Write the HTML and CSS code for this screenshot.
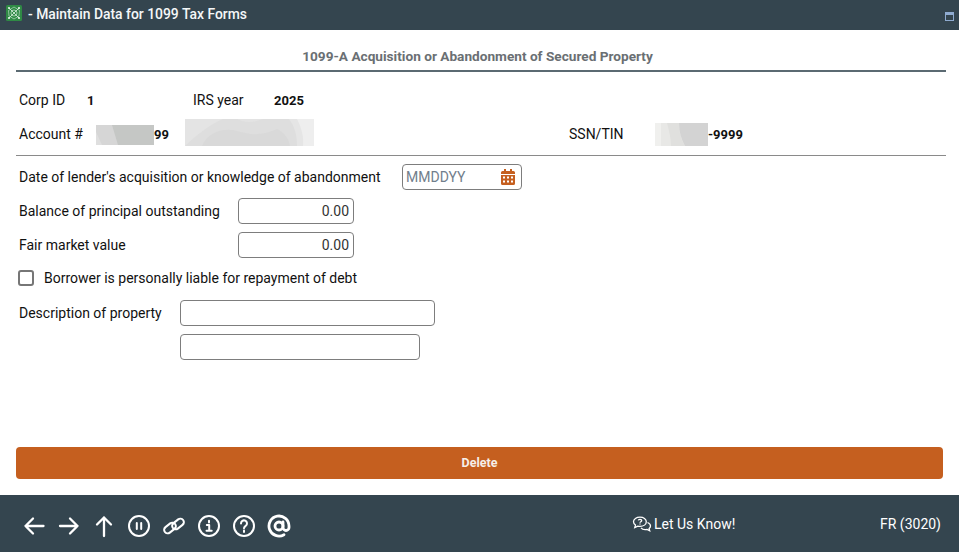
FILE: index.html
```html
<!DOCTYPE html>
<html lang="en">
<head>
<meta charset="utf-8">
<title>Maintain Data for 1099 Tax Forms</title>
<link rel="stylesheet" href="styles.css">
</head>
<body>
<div class="app">
  <header class="titlebar">
    <svg class="logo" viewBox="0 0 16 16" width="16" height="16">
      <rect width="16" height="16" rx="1.500" fill="#2f8a45"/>
      <g fill="none" stroke="#cfe8d6">
        <path d="M3 3 13 13M13 3 3 13" stroke-width=".9"/>
        <path d="M8 2 13.500 5.500 13 11 8 14 3 11 2.500 5.500Z" stroke-width=".6"/>
        <circle cx="8" cy="8" r="3" stroke-width=".7"/>
      </g>
      <g fill="#e6f4ea"><circle cx="3" cy="3" r="1.100"/><circle cx="13" cy="3" r="1.100"/><circle cx="3" cy="13" r="1.100"/><circle cx="13" cy="13" r="1.100"/></g>
    </svg>
    <span class="title">- Maintain Data for 1099 Tax Forms</span>
    <span class="winbtn"></span>
  </header>

  <main class="content">
    <h1 class="heading">1099-A Acquisition or Abandonment of Secured Property</h1>

    <section class="info">
      <div class="inforow">
        <span class="lbl w-corp">Corp ID</span>
        <b class="val w-one">1</b>
        <span class="lbl w-irs">IRS year</span>
        <b class="val">2025</b>
      </div>
      <div class="inforow inforow-2">
        <span class="lbl w-acct">Account #</span>
        <svg class="redact r-acct" viewBox="0 0 58 20" width="58" height="20">
          <rect width="58" height="20" fill="#d6d6d6"/>
          <path d="M0 7 6 20H0Z" fill="#dfdfdf"/>
          <path d="M16 0H58V20H22Z" fill="#c5c7c5"/>
        </svg>
        <b class="val w-acctval">99</b>
        <svg class="redact r-name" viewBox="0 0 129 27" width="129" height="27">
          <rect width="129" height="27" fill="#dedede"/>
          <path d="M0 0H38C20 8 10 18 0 27Z" fill="#e4e4e4"/>
          <path d="M17 27C22 14 38 8 52 12 66 16 76 17 92 10 100 14 104 20 105 27Z" fill="#d9d9d9"/>
          <path d="M52 0C60 4 68 4 78 0Z" fill="#e3e3e3"/>
          <path d="M104 0H129V27H112C112 16 110 8 104 0Z" fill="#e5e5e5"/>
          <path d="M112 0H129V27H118C119 16 116 8 112 0Z" fill="#eeeeee"/>
        </svg>
        <span class="lbl w-ssn">SSN/TIN</span>
        <svg class="redact r-ssn" viewBox="0 0 53 23" width="53" height="23">
          <rect width="53" height="23" fill="#e8e8e6"/>
          <rect width="6" height="23" fill="#f0f0ee"/>
          <path d="M12 0H24C24 8 26 17 30 23H16C16 15 14 8 12 0Z" fill="#e0e0de"/>
          <path d="M24 0H53V23H30C26 16 24 8 24 0Z" fill="#d3d3d3"/>
        </svg>
        <b class="val">-9999</b>
      </div>
    </section>

    <section class="form">
      <div class="row">
        <label class="lbl w-date">Date of lender's acquisition or knowledge of abandonment</label>
        <div class="box box-date">
          <span class="placeholder">MMDDYY</span>
          <svg class="cal" viewBox="0 0 14 16" width="14" height="16">
            <path fill="#c55f1f" d="M3 0h2v2h4V0h2v2h1.500A1.500 1.500 0 0 1 14 3.500V5H0V3.500A1.500 1.500 0 0 1 1.500 2H3Z"/>
            <path fill="#c55f1f" fill-rule="evenodd" d="M0 6h14v8.500a1.500 1.500 0 0 1-1.500 1.500h-11A1.500 1.500 0 0 1 0 14.500ZM2 7.500V9.500H4V7.500ZM6 7.500V9.500H8V7.500ZM10 7.500V9.500H12V7.500ZM2 11.500V13.500H4V11.500ZM6 11.500V13.500H8V11.500ZM10 11.500V13.500H12V11.500Z"/>
          </svg>
        </div>
      </div>
      <div class="row">
        <label class="lbl w-money">Balance of principal outstanding</label>
        <div class="box box-money">0.00</div>
      </div>
      <div class="row">
        <label class="lbl w-money">Fair market value</label>
        <div class="box box-money">0.00</div>
      </div>
      <div class="row row-check">
        <span class="check"></span>
        <label class="lbl">Borrower is personally liable for repayment of debt</label>
      </div>
      <div class="row row-desc">
        <label class="lbl w-desc">Description of property</label>
        <div class="box box-desc1"></div>
      </div>
      <div class="row">
        <div class="box box-desc2"></div>
      </div>
    </section>

    <button class="delete" type="button">Delete</button>
  </main>

  <footer class="footer">
    <nav class="icons">
      <svg viewBox="0 0 24 24" class="ico"><path d="M21.500 12H3.500M11 4.500 3.500 12l7.500 7.500"/></svg>
      <svg viewBox="0 0 24 24" class="ico"><path d="M3 12h17.500M13 4.500l7.500 7.500-7.500 7.500"/></svg>
      <svg viewBox="0 0 24 24" class="ico"><path d="M12 22V3.500M5 10.500l7-7 7 7"/></svg>
      <svg viewBox="0 0 24 24" class="ico ico-thin"><circle cx="12" cy="12" r="10"/><path d="M9.800 9v6M14.200 9v6"/></svg>
      <svg viewBox="0 0 24 24" class="ico ico-thin"><rect x="1.500" y="10.500" width="13" height="7" rx="3.500" transform="rotate(-38 8 14)"/><rect x="9.500" y="6.500" width="13" height="7" rx="3.500" transform="rotate(-38 16 10)"/></svg>
      <svg viewBox="0 0 24 24" class="ico ico-thin"><circle cx="12" cy="12" r="10"/><path d="M12 6.800v1.800M9.800 11h2.400v5.800M9.500 16.800h5.200"/></svg>
      <svg viewBox="0 0 24 24" class="ico ico-thin"><circle cx="12" cy="12" r="10"/><path d="M9 9.500a3 3 0 1 1 4.800 2.300c-1 .8-1.800 1.200-1.800 2.400M12 16.600v1.400"/></svg>
      <svg viewBox="0 0 24 24" class="ico ico-at"><circle cx="12" cy="12" r="4"/><path d="M16 8v5.500a3 3 0 0 0 6 0V12a10 10 0 1 0-5 8.700"/></svg>
    </nav>
    <div class="letus">
      <svg viewBox="0 0 20 16" width="20" height="16" class="chat">
        <path d="M8 1.200c3.600 0 6.300 2 6.300 4.600S11.600 10.400 8 10.400c-.8 0-1.500-.1-2.200-.3L2.800 11.500l.7-2.500C2.200 8.100 1.500 7 1.500 5.800 1.500 3.200 4.400 1.200 8 1.200Z"/>
        <path d="M15.500 6.500c1.900.7 3 2 3 3.500 0 1-.5 1.900-1.400 2.600l.6 2.200-2.700-1.300c-2 .4-4.700 0-6-1.600"/>
        <path d="M6.300 4.400c.2-1.500 3.400-1.500 3.400.2 0 1.100-1.700 1.200-1.700 2.200M8 7.600v1"/>
      </svg>
      <span>Let Us Know!</span>
    </div>
    <div class="code">FR (3020)</div>
  </footer>
</div>
</body>
</html>
```

FILE: styles.css
```css
* { box-sizing: border-box; }
html, body { margin: 0; padding: 0; }
body {
  font-family: Roboto, "Liberation Sans", sans-serif;
  font-size: 14px;
  color: #111;
  background: #fff;
}
.app {
  width: 959px;
  height: 552px;
  display: flex;
  flex-direction: column;
  overflow: hidden;
}

/* title bar */
.titlebar {
  height: 30px;
  flex: none;
  background: #34454f;
  color: #fff;
  display: flex;
  align-items: center;
  padding: 0 5px 0 6px;
}
.logo { flex: none; margin-top: -4px; }
.title {
  margin-left: 6px;
  font-size: 13.900px;
  font-weight: 500;
  color: #f4f7f8;
  flex: 1;
  margin-top: -2px;
}
.winbtn {
  width: 9px;
  height: 9px;
  margin: 3px 0 0;
  border: 1px solid #8fabd0;
  border-top-width: 3px;
}

/* main */
.content {
  flex: 1;
  display: flex;
  flex-direction: column;
  padding: 0 13px 0 16px;
}
.heading {
  margin: 0;
  width: 930px;
  height: 42px;
  padding: 18px 7px 0 0;
  line-height: 16px;
  border-bottom: 2px solid #5b6a72;
  font-size: 13.650px;
  font-weight: 700;
  text-align: center;
  color: #6a6f73;
}
.info {
  width: 930px;
  height: 84px;
  padding: 16px 0 0 3px;
  border-bottom: 1px solid #8a8a8a;
  flex: none;
}
.inforow { display: flex; align-items: center; height: 24px; }
.inforow-2 { margin-top: 10px; }
.lbl { display: block; white-space: nowrap; line-height: 16px; }
.val { font-size: 13px; font-weight: 700; line-height: 16px; margin-top: 2px; color: #111; }
.w-corp { width: 68px; }
.w-one { width: 106px; }
.w-irs { width: 81px; }
.w-acct { width: 77px; }
.w-acctval { width: 31px; }
.w-ssn { width: 86px; margin-left: 255px; }

.redact { display: block; flex: none; }
.r-acct { margin-top: 2px; }
.r-name { margin-top: -4px; }
.r-ssn { margin-top: 1px; }

/* form */
.form { display: flex; flex-direction: column; padding-left: 3px; }
.row { display: flex; align-items: center; height: 26px; margin-top: 8px; }
.w-date { width: 383px; }
.w-money { width: 219px; margin-top: -1px; }
.w-desc { width: 161px; margin-top: -1px; }
.box {
  height: 26px;
  border: 1px solid #7d7d7d;
  border-radius: 4px;
  background: #fff;
  flex: none;
}
.box-date {
  width: 120px;
  display: flex;
  align-items: center;
  justify-content: space-between;
  padding: 0 6px 0 3px;
}
.placeholder { color: #717e8c; line-height: 16px; }
.cal { flex: none; }
.box-money {
  width: 116px;
  text-align: right;
  padding-right: 4px;
  line-height: 24px;
  color: #333;
}
.box-desc1 { width: 255px; }
.box-desc2 { width: 240px; margin-left: 161px; }
.row-check { height: 16px; margin-top: 12px; }
.check {
  width: 16px;
  height: 16px;
  border: 2px solid #767676;
  border-radius: 3px;
  margin: 0 10px 0 -1px;
  flex: none;
}
.row-desc { margin-top: 14px; }

.delete {
  margin-top: 87px;
  width: 927px;
  height: 32px;
  flex: none;
  border: 0;
  border-radius: 4px;
  background: #c55f1f;
  color: #f6efe9;
  font-family: inherit;
  font-size: 12.500px;
  font-weight: 700;
  padding: 0 0 2px;
}

/* footer */
.footer {
  height: 57px;
  flex: none;
  background: #34454f;
  color: #fff;
  display: flex;
  align-items: center;
  padding: 4px 18px 0 22px;
}
.icons { display: flex; gap: 11px; width: 610px; flex: none; }
.ico {
  width: 24px;
  height: 24px;
  fill: none;
  stroke: #fff;
  stroke-width: 2.300;
  stroke-linecap: round;
  stroke-linejoin: round;
  flex: none;
}
.ico-thin { stroke-width: 2; }
.ico-at { stroke-width: 2.800; }
.letus { display: flex; align-items: center; gap: 2px; flex: 1; margin-top: -4px; }
.chat { fill: none; stroke: #fff; stroke-width: 1.300; }
.code { margin-top: -4px; }
```
